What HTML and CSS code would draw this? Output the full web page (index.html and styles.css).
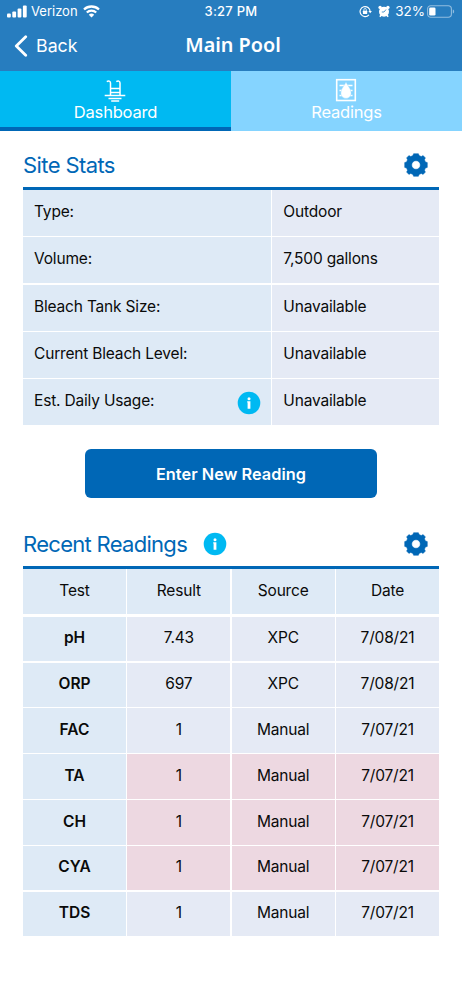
FILE: index.html
```
<!DOCTYPE html>
<html lang="en">
<head>
<meta charset="utf-8">
<title>Main Pool</title>
<link rel="stylesheet" href="styles.css">
</head>
<body>
<svg class="defs" width="0" height="0">
  <symbol id="gear" viewBox="-12 -12 24 24">
    <path fill="currentColor" fill-rule="evenodd" d="M-2.4-11.3H2.4L3.1-9.4 5.3-8.5 7.1-9.4 9.4-7.1 8.5-5.3 9.4-3.1 11.3-2.4V2.4L9.4 3.1 8.5 5.3 9.4 7.1 7.1 9.4 5.3 8.5 3.1 9.4 2.4 11.3H-2.4L-3.1 9.4-5.3 8.5-7.1 9.4-9.4 7.1-8.5 5.3-9.4 3.1-11.3 2.4V-2.4L-9.4-3.1-8.5-5.3-9.4-7.1-7.1-9.4-5.3-8.5-3.1-9.4ZM0-4.3A4.3 4.3 0 1 0 0 4.3 4.3 4.3 0 1 0 0-4.3Z" stroke="currentColor" stroke-width=".5" stroke-linejoin="round"/>
  </symbol>
  <symbol id="info" viewBox="0 0 24 24">
    <circle cx="12" cy="12" r="11.3" fill="#00b9f2"/>
    <circle cx="12" cy="7.8" r="1.5" fill="#fff"/>
    <path d="M10.2 10.3h3.2v7.4h-2.8v-6.2h-.4z" fill="#fff"/>
  </symbol>
</svg>
<header class="header">
  <div class="status">
    <div class="carrier">
      <svg width="20" height="13" viewBox="0 0 20 13" fill="#fff"><rect x="0" y="8.4" width="3.8" height="4" rx="1"/><rect x="5.3" y="6.4" width="3.8" height="6" rx="1"/><rect x="10.6" y="3.5" width="3.8" height="8.9" rx="1"/><rect x="15.9" y=".6" width="3.8" height="11.8" rx="1"/></svg>
      <span class="carrier-name">Verizon</span>
      <svg width="17" height="13" viewBox="0 0 17 13" fill="none" stroke="#fff" stroke-width="2.3"><path d="M1 4.5a10.9 10.9 0 0 1 15 0"/><path d="M3.8 7.5a6.9 6.9 0 0 1 9.4 0"/><path fill="#fff" stroke="none" d="M8.5 12.5 5.8 9.7a4 4 0 0 1 5.4 0z"/></svg>
    </div>
    <span class="time">3:27 PM</span>
    <div class="power">
      <svg width="13" height="13" viewBox="0 0 13 13" fill="none" stroke="#fff"><path d="M9.9 9.8a5 5 0 1 1 1.2-3.3" stroke-width="1.2"/><path d="M9.4 5.9h3.5l-1.7 2.4z" fill="#fff" stroke="none"/><rect x="3.9" y="5.7" width="4.3" height="3.4" rx=".5" fill="#fff" stroke="none"/><path d="M4.9 6V4.7a1.2 1.2 0 0 1 2.4 0V6" stroke-width=".8"/></svg>
      <svg class="alarm" width="12" height="13" viewBox="0 0 12 13"><g fill="#fff"><circle cx="6" cy="6.7" r="5"/><circle cx="2.1" cy="2.4" r="1.7"/><circle cx="9.9" cy="2.4" r="1.7"/><path d="m2.5 9.5 1.4 1.3-1.6 1.4-1-1zM9.5 9.5 8.1 10.8l1.6 1.4 1-1z"/></g><path d="M8 4.5 6 7H3.8" fill="none" stroke="#277dbf" stroke-width=".8"/></svg>
      <span class="percent">32%</span>
      <svg width="28" height="13" viewBox="0 0 28 13"><rect x=".6" y=".7" width="23.8" height="11.6" rx="3.2" fill="none" stroke="#91bddf" stroke-width="1.1"/><rect x="2.2" y="2.4" width="6.3" height="8.2" rx="1.3" fill="#fff"/><path d="M25.8 4.5c1.8.5 1.8 3.5 0 4z" fill="#91bddf"/></svg>
    </div>
  </div>
  <div class="nav">
    <div class="back"><svg width="14" height="22" viewBox="0 0 14 22"><path d="m11.7 1.7-9.4 9.3 9.4 9.3" fill="none" stroke="#fff" stroke-width="2.8" stroke-linecap="round" stroke-linejoin="round"/></svg><span>Back</span></div>
    <h1 class="title">Main Pool</h1>
  </div>
</header>
<nav class="tabs">
  <div class="tab tab-active">
    <svg width="22" height="22" viewBox="0 0 22 22" fill="none" stroke="#fff" stroke-width="1.5"><path d="M2.8 1.7C4.6.4 6.5 1 6.5 3v12.5M12.3 1.7C14.1.4 16 1 16 3v12.5M6.5 8.5H16M6.5 12.5H16M.7 15.5h20.6M4.5 18.5h13M7.2 21h8"/></svg>
    <span>Dashboard</span>
  </div>
  <div class="tab tab-idle">
    <svg width="22" height="24" viewBox="0 0 22 24"><rect x="1.7" y="1.7" width="18.6" height="20.8" fill="none" stroke="#fff" stroke-width="1.6"/><path d="M4.5 7.5h13M4.5 12.5h13M4.5 17.5h13" stroke="#fff" stroke-width="1.6"/><path d="M11 3.8C12 7 16.2 10.5 16.2 15.2a5.2 5.2 0 0 1-10.4 0C5.8 10.5 10 7 11 3.8z" fill="#fff" stroke="#85d4ff" stroke-width=".4"/></svg>
    <span>Readings</span>
  </div>
</nav>
<main class="content">
  <div class="heading"><h2>Site Stats</h2><svg class="gear"><use href="#gear"/></svg></div>
  <div class="stats">
    <div class="label">Type:</div><div class="value">Outdoor</div>
    <div class="label">Volume:</div><div class="value">7,500 gallons</div>
    <div class="label">Bleach Tank Size:</div><div class="value">Unavailable</div>
    <div class="label">Current Bleach Level:</div><div class="value">Unavailable</div>
    <div class="label">Est. Daily Usage:<svg class="info"><use href="#info"/></svg></div><div class="value">Unavailable</div>
  </div>
  <button class="enter">Enter New Reading</button>
  <div class="heading heading-recent"><h2 class="recent-title">Recent Readings</h2><svg class="info"><use href="#info"/></svg><svg class="gear"><use href="#gear"/></svg></div>
  <div class="readings">
    <div class="row row-head"><span>Test</span><span>Result</span><span>Source</span><span>Date</span></div>
    <div class="row"><b>pH</b><span>7.43</span><span>XPC</span><span>7/08/21</span></div>
    <div class="row"><b>ORP</b><span>697</span><span>XPC</span><span>7/08/21</span></div>
    <div class="row"><b>FAC</b><span>1</span><span>Manual</span><span>7/07/21</span></div>
    <div class="row row-alert"><b>TA</b><span>1</span><span>Manual</span><span>7/07/21</span></div>
    <div class="row row-alert"><b>CH</b><span>1</span><span>Manual</span><span>7/07/21</span></div>
    <div class="row row-alert"><b>CYA</b><span>1</span><span>Manual</span><span>7/07/21</span></div>
    <div class="row"><b>TDS</b><span>1</span><span>Manual</span><span>7/07/21</span></div>
  </div>
</main>
</body>
</html>
```
FILE: styles.css
```
* { box-sizing: border-box; }
body { margin: 0; background: #fff; color: #0a0a0a; font: 15.5px/20px Inter, "Liberation Sans", sans-serif; letter-spacing: -.18px; min-height: 1000px; }
h1, h2 { margin: 0; }
svg { display: block; flex: none; }
.defs { position: absolute; }
.header { height: 71px; background: #277dbf; color: #fff; letter-spacing: 0; }
.status { height: 22px; display: grid; grid-template-columns: 1fr auto 1fr; align-items: center; padding: 0 7px 0 7px; font-size: 13.5px; line-height: 16px; }
.carrier, .power { display: flex; align-items: center; }
.carrier-name { margin: 0 5px 0 4px; font-size: 13px; }
.time { font-size: 13px; font-weight: 500; letter-spacing: .25px; }
.power { justify-content: flex-end; }
.alarm { margin: 0 5px 0 6px; }
.percent { margin-right: 2px; font-size: 13.5px; }
.nav { height: 46px; display: grid; grid-template-columns: 1fr auto 1fr; align-items: center; padding: 0 7px; }
.back { display: flex; align-items: center; gap: 8px; padding: 1px 0 0 7px; font-size: 17.8px; }
.title { font: 600 19.8px/26px "Noto Sans", sans-serif; padding: 0 0 1px 4px; }
.tabs { display: grid; grid-template-columns: 1fr 1fr; height: 60px; color: #fff; font-size: 16.5px; letter-spacing: -.2px; }
.tab { display: flex; flex-direction: column; align-items: center; justify-content: flex-end; line-height: 20px; }
.tab-active { background: #00b9f2; border-bottom: 4px solid #0067b6; padding-bottom: 5px; }
.tab-active svg { margin-right: 1px; }
.tab-idle { background: #85d4ff; padding-bottom: 9px; }
.tab-idle svg { margin-right: 1px; }
.content { padding: 0 23px; display: flex; flex-direction: column; }
.heading { height: 59px; border-bottom: 3px solid #0067b6; display: flex; align-items: center; padding: 12px 11px 0 0; color: #0067b6; }
.heading h2 { font-size: 22px; line-height: 28px; font-weight: 400; letter-spacing: -.6px; }
.gear { width: 24px; height: 24px; margin-left: auto; }
.info { width: 24px; height: 24px; }
.stats { display: grid; grid-template-columns: 248px 167px; grid-auto-rows: 46px; gap: 1.35px; }
.label { background: #deeaf6; padding: 12px 10px 10px 11px; display: flex; justify-content: space-between; }
.value { background: #e5eaf5; padding: 12px 11px 10px; }
.enter { align-self: center; width: 292px; height: 49px; margin: 24px 0 24px; border: 0; border-radius: 6px; background: #0067b6; color: #fff; font: 600 16.3px/20px Inter, sans-serif; letter-spacing: .05px; }
.heading-recent { height: 47px; padding-top: 0; }
.heading .recent-title { margin-right: 16px; letter-spacing: -.7px; }
.readings { display: grid; gap: 1.35px; }
.row { display: grid; grid-template-columns: repeat(4, 1fr); gap: 1.3px; height: 44.5px; text-align: center; }
.row > * { background: #e5eaf5; padding-top: 11.5px; }
.row > b { background: #deeaf6; font-weight: 600; letter-spacing: 0; }
.row-head { height: 45px; margin-bottom: 1px; }
.row-head > * { background: #deeaf6; padding-top: 12px; }
.row-alert > span { background: #edd8e1; }
```
